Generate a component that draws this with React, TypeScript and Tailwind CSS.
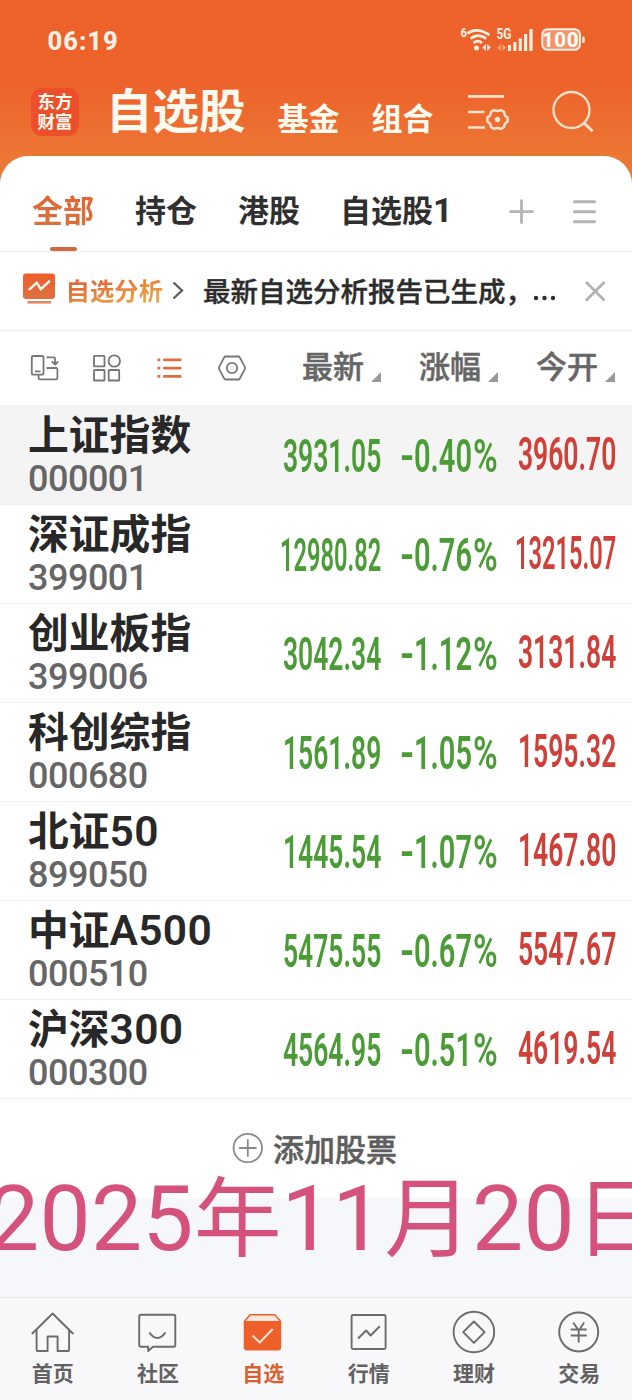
import { useLayoutEffect, useRef, useState } from "react";

const quotes = [
  { name: "上证指数", digits: "", code: "000001", last: "3931.05", change: "0.40", open: "3960.70" },
  { name: "深证成指", digits: "", code: "399001", last: "12980.82", change: "0.76", open: "13215.07" },
  { name: "创业板指", digits: "", code: "399006", last: "3042.34", change: "1.12", open: "3131.84" },
  { name: "科创综指", digits: "", code: "000680", last: "1561.89", change: "1.05", open: "1595.32" },
  { name: "北证", digits: "50", code: "899050", last: "1445.54", change: "1.07", open: "1467.80" },
  { name: "中证", digits: "A500", code: "000510", last: "5475.55", change: "0.67", open: "5547.67" },
  { name: "沪深", digits: "300", code: "000300", last: "4564.95", change: "0.51", open: "4619.54" },
];

/** Squeezes a single line of text horizontally so that it fills `width`. */
function Fit({ width, text, className = "" }: { width: number; text: string; className?: string }) {
  const ref = useRef<HTMLSpanElement>(null);
  const [scale, setScale] = useState(1);
  useLayoutEffect(() => {
    if (ref.current) setScale(width / ref.current.offsetWidth);
  }, [width, text]);
  return (
    <span className={`block ${className}`} style={{ width }}>
      <span ref={ref} className="inline-block origin-left whitespace-nowrap" style={{ transform: `scaleX(${scale})` }}>
        {text}
      </span>
    </span>
  );
}

function StatusIcons() {
  return (
    <svg width="134" height="36" viewBox="454 19 134 36" className="mt-[19px] font-[Roboto]" fill="none" stroke="#fff0e4">
      <text x="460.5" y="37" fontSize="12.5" fontWeight="700" fill="#fff0e4" stroke="none" textLength="6.5" lengthAdjust="spacingAndGlyphs">6</text>
      <path d="M467.500 33.400q9-6.800 22 1.600M470.600 38.600q7.500-6 15.600 0M473.600 43q4.300-3.600 8.400 0" strokeWidth="2.700" />
      <circle cx="476.500" cy="48" r="2.500" fill="#fff0e4" stroke="none" />
      <path d="M485.800 44v7l-3.500-3.300zM487.200 51v-7l3.600 3.400z" fill="#fff0e4" stroke="none" />
      <text x="496.500" y="39.300" fontSize="14" fontWeight="700" fill="#fff0e4" stroke="none" textLength="15" lengthAdjust="spacingAndGlyphs">5G</text>
      <path d="M501 44v7l-4-3.300zM502.200 51v-7l4 3.400z" fill="#f59a72" stroke="none" />
      <path d="M508 45h3v6h-3zM513.300 42h3.100v9h-3.100zM518.700 38.500h3.100V51h-3.100zM524 34h3.200v17H524zM529.400 29h3.200v22h-3.200z" fill="#fff0e4" stroke="none" />
      <rect x="542.200" y="29.200" width="37.800" height="20.600" rx="5.500" fill="#f3936a" strokeWidth="2" />
      <path d="M582.300 36.500h.7a1.800 1.800 0 0 1 1.800 1.800v3a1.800 1.800 0 0 1-1.800 1.800h-.7z" fill="#fff0e4" stroke="none" />
      <text x="542" y="46.700" fontSize="20.500" fontWeight="800" fill="#fffaf5" stroke="none" textLength="36.500">100</text>
    </svg>
  );
}

function Header() {
  return (
    <header className="h-[184px] bg-[linear-gradient(180deg,#ee612b_0px,#ed622b_80px,#ec7634_156px,#ec7634_184px)] text-[#fffaf0]">
      <div className="flex h-[80px] justify-between pr-[44px] pl-[47.500px]">
        <div className="pt-[27.500px] font-[Roboto] text-[25.500px] leading-[26px] font-extrabold tracking-[1px] text-[#fff0e4]">06:19</div>
        <StatusIcons />
      </div>
      <div className="flex items-start pl-[31px]">
        <div className="mt-[8px] h-[48px] w-[48px] rounded-[11px] bg-[#ec502b] pt-[2.500px] text-center text-[17.500px] leading-[20px] font-bold">
          <div>东方</div>
          <div>财富</div>
        </div>
        <h1 className="mt-[3px] ml-[27px] text-[46.500px] leading-[50px] font-bold">自选股</h1>
        <div className="mt-[20px] ml-[32px] text-[31px] leading-[34px] font-bold">基金</div>
        <div className="mt-[20px] ml-[32px] text-[31px] leading-[34px] font-bold">组合</div>
        <svg width="44" height="40" viewBox="467 92 44 40" className="mt-[12px] ml-[33px]" fill="none" stroke="#ffe3cc" strokeWidth="2.700">
          <path d="M468 96.300h36M468 112h16.500M468 127.500h17" />
          <path d="M494.200 110q3.300 2 6.600 0l3.200 1.900q0 3.800 3.600 5.500v4.200q-3.600 1.700-3.600 5.500l-3.200 1.900q-3.300-2-6.600 0l-3.200-1.900q0-3.800-3.600-5.500v-4.200q3.600-1.700 3.600-5.500z" strokeWidth="2.500" strokeLinejoin="round" />
          <circle cx="497.500" cy="119.500" r="2.700" fill="#ffe3cc" stroke="none" />
        </svg>
        <svg width="44" height="44" viewBox="551 90 44 44" className="mt-[10px] ml-[40px]" fill="none" stroke="#ffe3cc" strokeWidth="2.300">
          <circle cx="571.500" cy="110" r="18" />
          <path d="M584 123l8.600 8.200" strokeWidth="2.900" />
        </svg>
      </div>
    </header>
  );
}

function Tabs() {
  return (
    <div className="flex h-[96px] items-start border-b border-[#ececec] pl-[32px] text-[31px] leading-[34px] font-bold text-[#303030]">
      <div className="mt-[36px] flex w-[62px] flex-col items-center">
        <span className="bg-linear-to-b from-[#e06432] to-[#d8713f] bg-clip-text text-transparent">全部</span>
        <span className="mt-[21px] h-[4px] w-[27px] rounded-full bg-[#d06a3e]" />
      </div>
      <div className="mt-[36px] ml-[41px]">持仓</div>
      <div className="mt-[36px] ml-[41px]">港股</div>
      <div className="mt-[36px] ml-[40px]">自选股<span className="font-[Roboto] text-[34px] leading-none">1</span></div>
      <svg width="90" height="30" viewBox="508 197 90 30" className="mt-[41px] mr-[34px] ml-auto" fill="none" stroke="#b4b4b4" strokeWidth="3" strokeLinecap="round">
        <path d="M510.500 211.700h22M521.500 200.700v22" strokeWidth="2.800" />
        <path d="M574.500 201.700h20M574.500 211.700h20M574.500 221.700h20" />
      </svg>
    </div>
  );
}

function Banner() {
  return (
    <div className="flex h-[79px] items-start border-b border-[#ececec] pl-[23px]">
      <svg width="32" height="31" viewBox="23 273 32 31" className="mt-[21px]" fill="none">
        <defs>
          <linearGradient id="board" x1="0" y1="0" x2="0" y2="1">
            <stop offset="0" stopColor="#ee5e2a" />
            <stop offset="1" stopColor="#df7041" />
          </linearGradient>
        </defs>
        <rect x="23" y="273.500" width="32" height="25.500" rx="3" fill="url(#board)" />
        <path d="M28.800 290l8-7.300 4 6.400 9-8.200" stroke="#fff" strokeWidth="2.300" />
        <path d="M27.500 302.300h23.500" stroke="#e2895f" strokeWidth="2.600" />
      </svg>
      <div className="mt-[20.500px] ml-[10.500px] bg-[linear-gradient(165deg,#e56c35_30%,#eaa548_80%)] bg-clip-text text-[24.300px] leading-[34px] font-bold tracking-[0.100px] text-transparent">自选分析</div>
      <svg width="12" height="20" viewBox="172 281 12 20" className="mt-[29px] ml-[8.500px]" fill="none" stroke="#5c5c5c" strokeWidth="2.300">
        <path d="M173.500 282.500l8.500 8-8.500 8" />
      </svg>
      <div className="mt-[20.500px] ml-[19.500px] text-[27.500px] leading-[34px] font-medium text-[#2c2c2c] [-webkit-text-stroke:0.4px]">
        最新自选分析报告已生成，
      </div>
      <svg width="24" height="6" viewBox="0 0 24 6" className="mt-[43px] -ml-[0.500px]" fill="#2c2c2c">
        <circle cx="3" cy="3" r="2.200" /><circle cx="11.500" cy="3" r="2.200" /><circle cx="20" cy="3" r="2.200" />
      </svg>
      <svg width="22" height="22" viewBox="584 280 22 22" className="mt-[28px] mr-[26px] ml-auto" fill="none" stroke="#b0b0b0" strokeWidth="2.600">
        <path d="M586 282l18.500 18.500M604.500 282L586 300.500" />
      </svg>
    </div>
  );
}

function SortLabel({ text }: { text: string }) {
  return (
    <div className="flex w-[79px] items-start">
      <span>{text}</span>
      <svg width="10" height="10" viewBox="0 0 10 10" className="mt-[24px] ml-[7px]"><path d="M10 0v10H0z" fill="#9a9a9a" /></svg>
    </div>
  );
}

function Toolbar() {
  return (
    <div className="flex h-[74px] items-start pl-[29px]">
      <svg width="218" height="30" viewBox="29 353 218 30" className="mt-[22px]" fill="none" stroke="#777" strokeWidth="1.800">
        <rect x="31.800" y="356" width="11.700" height="18.700" rx="1.200" />
        <path d="M35 371.300h5.500M46.500 357.300h7.500a1 1 0 0 1 1 1v6M51.800 361.500l3.400 3 3-3M46.500 368h9.700a1.200 1.200 0 0 1 1.200 1.200v8.900a1.200 1.200 0 0 1-1.200 1.200H39.800a1.200 1.200 0 0 1-1.200-1.200v-3.400" />
        <rect x="94" y="355.800" width="10.500" height="10.500" rx=".6" />
        <circle cx="114.300" cy="361" r="5.700" />
        <rect x="94" y="370" width="10.500" height="10.500" rx=".6" />
        <rect x="108.700" y="370" width="10.500" height="10.500" rx=".6" />
        <path d="M164.300 359.800h16M164.300 368.100h16M164.300 376.400h16" stroke="#dc6f40" strokeWidth="2.800" strokeLinecap="round" />
        <path d="M157.500 359.800h2.800M157.500 368.100h2.800M157.500 376.400h2.800" stroke="#dc6f40" strokeWidth="2.800" />
        <path d="M225.600 356.500h12.800a1.500 1.500 0 0 1 1.300.8l5 9.300a3 3 0 0 1 0 2.800l-5 9.300a1.500 1.500 0 0 1-1.300.8h-12.800a1.500 1.500 0 0 1-1.300-.8l-5-9.300a3 3 0 0 1 0-2.800l5-9.300a1.500 1.500 0 0 1 1.300-.8z" />
        <circle cx="232" cy="368" r="5.200" />
      </svg>
      <div className="mt-[17px] ml-[55px] flex gap-[38px] text-[31px] leading-[34px] font-medium text-[#666] [-webkit-text-stroke:0.5px]">
        <SortLabel text="最新" />
        <SortLabel text="涨幅" />
        <SortLabel text="今开" />
      </div>
    </div>
  );
}

function QuoteList() {
  return (
    <ul>
      {quotes.map((q, i) => (
        <li key={q.code} className={`flex h-[99px] items-start pl-[28px] shadow-[0_1px_0_#f0f0f0] ${i === 0 ? "bg-[#f4f4f4]" : ""}`}>
          <div className="w-[254px] pt-[6.500px]">
            <div className="flex h-[42px] items-baseline text-[40.800px] leading-[42px] font-bold text-[#282828]">
              {q.name}
              <span className="font-[Roboto] text-[42.500px] leading-[42px] font-semibold tracking-[0.300px]">{q.digits}</span>
            </div>
            <div className="mt-[7px] font-[Roboto] text-[36px] leading-[36px] font-medium tracking-[-0.500px] text-[#666]">{q.code}</div>
          </div>
          <div className="flex items-start font-[Roboto] text-[47px] leading-[47px] font-semibold">
            <div className="mt-[27px] flex w-[99px] justify-end text-[#4b9c37]">
              <Fit width={q.last.length > 7 ? 101 : 98} text={q.last} />
            </div>
            <div className="mt-[27px] ml-[19px] flex text-[#4b9c37]">
              <Fit width={14} text="-" />
              <Fit width={58} text={q.change} />
              <Fit className="ml-px" width={25} text="%" />
            </div>
            <div className="mt-[25px] ml-[17px] flex w-[101px] justify-end text-[#cf4038]">
              <Fit width={q.open.length > 7 ? 101 : 98} text={q.open} />
            </div>
          </div>
        </li>
      ))}
    </ul>
  );
}

const navItems = [
  {
    label: "首页",
    icon: <path d="M31.500 1334l20.800-20.500 20.800 20.500M36.300 1330v20a1 1 0 0 0 1 1h10V1336.500h10V1351h10.500a1 1 0 0 0 1-1v-20" />,
    box: "30.700 1310 44 44",
  },
  {
    label: "社区",
    icon: (
      <>
        <path d="M141 1314.800h32.500a1.800 1.800 0 0 1 1.800 1.800v28.300a1.800 1.800 0 0 1-1.800 1.800H153l-4.800 4.300v-4.300H141a1.800 1.800 0 0 1-1.800-1.800v-28.300a1.800 1.800 0 0 1 1.800-1.800z" />
        <path d="M149.300 1332.500q8 11 16.200 0" strokeWidth="2" />
      </>
    ),
    box: "136 1310 44 44",
  },
  {
    label: "自选",
    icon: (
      <>
        <path d="M250 1314h25.500l6 7v26a3.500 3.500 0 0 1-3.500 3.500h-30.500a3.500 3.500 0 0 1-3.500-3.500v-26z" fill="#ee602a" stroke="none" />
        <path d="M250.800 1315.500h24.200l4.500 5.500h-33.500z" fill="#fde7db" stroke="none" />
        <path d="M253 1335.500l7 7 13-13.500" stroke="#fde7db" strokeWidth="2" />
      </>
    ),
    box: "241.300 1310 44 44",
  },
  {
    label: "行情",
    icon: (
      <>
        <rect x="351.300" y="1315" width="34" height="34" rx="1.500" />
        <path d="M357.800 1338.500l8-8 4.500 5 9.200-9.200" strokeWidth="2" />
      </>
    ),
    box: "346.700 1310 44 44",
  },
  {
    label: "理财",
    icon: (
      <>
        <circle cx="473.900" cy="1332" r="20.300" />
        <path d="M473.900 1321.500l10.700 10.700-10.700 10.700-10.700-10.700z" />
      </>
    ),
    box: "452 1310 44 44",
  },
  {
    label: "交易",
    icon: (
      <>
        <circle cx="579" cy="1332" r="19.500" />
        <path d="M573.500 1322.500l5.500 8 5.500-8M579 1330.500v12M571 1329.500h16M571 1335.500h16" />
      </>
    ),
    box: "557.300 1310 44 44",
  },
];

function BottomNav() {
  return (
    <nav className="grid h-[103px] grid-cols-6 border-t border-[#e8e8ea] bg-[#f8f8fb] text-[#626262]">
      {navItems.map((item) => (
        <div key={item.label} className={`flex flex-col items-center pt-[12px] ${item.label === "自选" ? "text-[#d7622f]" : ""}`}>
          <svg width="44" height="44" viewBox={item.box} fill="none" stroke="#6c6c6c" strokeWidth="1.900" strokeLinejoin="round">
            {item.icon}
          </svg>
          <span className="mt-[6px] text-[21px] leading-[24px] font-bold">{item.label}</span>
        </div>
      ))}
    </nav>
  );
}

export default function App() {
  return (
    <div className="relative flex h-[1400px] w-[632px] flex-col overflow-hidden bg-[#f6f7fa] font-['Noto_Sans_CJK_SC',sans-serif]">
      <Header />
      <main className="relative -mt-[28px] h-[1042px] rounded-t-[28px] bg-white">
        <Tabs />
        <Banner />
        <Toolbar />
        <QuoteList />
        <div className="mt-[33px] flex items-start pl-[232px] text-[31px] leading-[34px] font-medium text-[#5e5e5e] [-webkit-text-stroke:0.5px]">
          <svg width="32" height="32" viewBox="0 0 32 32" className="mt-px" fill="none" stroke="#8a8a8a" strokeWidth="1.800">
            <circle cx="15.800" cy="16" r="14.200" />
            <path d="M7 16h17.600M15.800 7.200v17.600" />
          </svg>
          <span className="ml-[9px]">添加股票</span>
        </div>
      </main>
      <div className="mt-auto"><BottomNav /></div>
      <div className="absolute top-[1162px] left-[-12px] flex items-baseline text-[87.500px] leading-[100px] whitespace-nowrap text-[#d5527c]">
        <span className="w-[206px] font-[Roboto] text-[91px] tracking-[0.300px]">2025</span>
        <span>年</span>
        <span className="w-[103px] font-[Roboto] text-[91px] tracking-[-0.500px]">11</span>
        <span>月</span>
        <span className="w-[103px] font-[Roboto] text-[91px] tracking-[0.300px]">20</span>
        <span>日</span>
      </div>
    </div>
  );
}
